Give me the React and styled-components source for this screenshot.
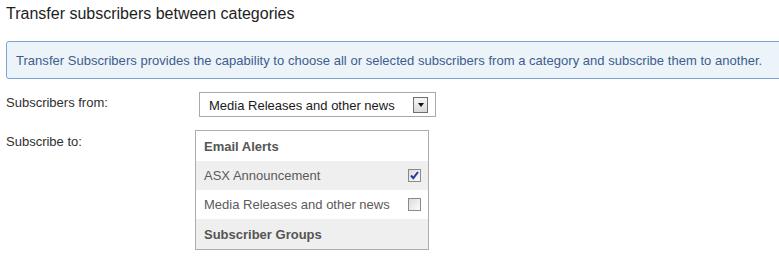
import React from 'react'
import styled, { createGlobalStyle } from 'styled-components'

const GlobalStyle = createGlobalStyle`
  html, body {
    margin: 0;
    padding: 0;
    background: #fff;
  }
  body {
    font-family: "Liberation Sans", Arial, sans-serif;
    font-size: 13px;
    color: #333;
    overflow: hidden;
  }
`

const Page = styled.div`
  width: 779px;
  padding: 5px 0 0 6px;
  box-sizing: border-box;
  overflow: hidden;
`

const Title = styled.h1`
  margin: 0;
  font-size: 16px;
  font-weight: normal;
  line-height: 18px;
  color: #1e1e1e;
`

const InfoBox = styled.div`
  margin: 18px -10px 0 0;
  padding: 11px 9px 10px 9px;
  background: #edf4f9;
  border: 1px solid #7aa4d2;
  border-radius: 3px;
  color: #3c5d8e;
  line-height: 15px;
  letter-spacing: 0.03px;
`

const FormRow = styled.div`
  display: flex;
  align-items: flex-start;
  margin-top: ${p => p.$top}px;
`

const Label = styled.div`
  width: ${p => p.$width}px;
  padding-top: ${p => p.$pad}px;
  line-height: 15px;
  color: #2f2f2f;
  flex: none;
`

const Select = styled.div`
  width: 237px;
  height: 25px;
  box-sizing: border-box;
  border: 1px solid #a9a9a9;
  display: flex;
  align-items: center;
  justify-content: space-between;
  padding: 2px 7px 0 9px;
  color: #1a1a1a;
`

const SelectButton = styled.span`
  width: 15px;
  height: 16px;
  box-sizing: border-box;
  border: 1px solid #6f6f6f;
  background: linear-gradient(#f6f6f6, #d9d9d9);
  display: flex;
  align-items: center;
  justify-content: center;
  margin-top: -1px;
`

const Arrow = styled.span`
  width: 0;
  height: 0;
  border-left: 3.5px solid transparent;
  border-right: 3.5px solid transparent;
  border-top: 4px solid #111;
`

const ListBox = styled.div`
  width: 234px;
  box-sizing: border-box;
  border: 1px solid #acacac;
`

const ListRow = styled.div`
  height: ${p => (p.$header ? 30 : 29)}px;
  display: flex;
  align-items: center;
  justify-content: space-between;
  padding: 0 7px 0 8px;
  background: ${p => (p.$shade ? '#efefef' : '#fff')};
  color: ${p => (p.$header ? '#555' : '#5a5a5a')};
  font-weight: ${p => (p.$header ? 'bold' : 'normal')};
`

const Box = styled.span`
  width: 13px;
  height: 13px;
  box-sizing: border-box;
  border: 1px solid #8a8a8a;
  background: linear-gradient(135deg, #dcdcdc, #fbfbfb);
  display: flex;
  align-items: center;
  justify-content: center;
`

function Checkbox({ checked }) {
  return (
    <Box>
      {checked && (
        <svg width="9" height="9" viewBox="0 0 9 9">
          <path d="M1 4.5 L3.3 7.2 L8 1" fill="none" stroke="#27399a" strokeWidth="2" />
        </svg>
      )}
    </Box>
  )
}

const rows = [
  { text: 'Email Alerts', header: true },
  { text: 'ASX Announcement', shade: true, checked: true },
  { text: 'Media Releases and other news', checked: false },
  { text: 'Subscriber Groups', header: true, shade: true },
]

export default function App() {
  return (
    <Page>
      <GlobalStyle />
      <Title>Transfer subscribers between categories</Title>
      <InfoBox>
        Transfer Subscribers provides the capability to choose all or selected subscribers from a category and subscribe them to another.
      </InfoBox>
      <FormRow $top={13}>
        <Label $width={193} $pad={3}>Subscribers from:</Label>
        <Select>
          <span>Media Releases and other news</span>
          <SelectButton><Arrow /></SelectButton>
        </Select>
      </FormRow>
      <FormRow $top={13}>
        <Label $width={189} $pad={4}>Subscribe to:</Label>
        <ListBox>
          {rows.map(r => (
            <ListRow key={r.text} $header={r.header} $shade={r.shade}>
              <span>{r.text}</span>
              {!r.header && <Checkbox checked={r.checked} />}
            </ListRow>
          ))}
        </ListBox>
      </FormRow>
    </Page>
  )
}
